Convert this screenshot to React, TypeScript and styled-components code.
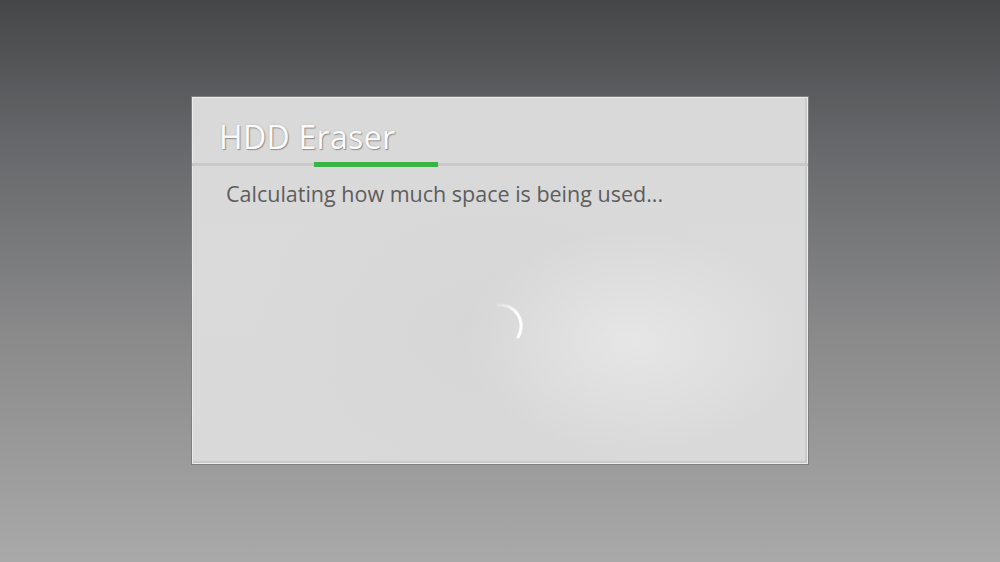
import React from "react";
import styled, { createGlobalStyle } from "styled-components";

const Global = createGlobalStyle`
  html, body { margin: 0; padding: 0; }
  body { width: 1000px; height: 562px; overflow: hidden; }
`;

const Screen = styled.div`
  width: 1000px;
  height: 562px;
  display: flex;
  align-items: center;
  justify-content: center;
  background: linear-gradient(to bottom, #454648 0%, #66676a 25%, #8a8a8b 60%, #a9a9a9 100%);
  font-family: "Open Sans", "Noto Sans", sans-serif;
`;

const Panel = styled.div`
  box-sizing: border-box;
  width: 618px;
  height: 369px;
  margin-top: -1px;
  border: 1px solid #7e7f80;
  box-shadow: inset 0 0 0 1px #ececec, inset -1px -1px 0 2px #c9c9c9;
  background:
    radial-gradient(ellipse 170px 110px at 440px 245px, rgba(236,236,236,0.7), rgba(236,236,236,0) 100%),
    radial-gradient(ellipse 240px 170px at 300px 230px, rgba(205,205,205,0.3), rgba(205,205,205,0) 100%),
    linear-gradient(to bottom, #d9d9d9 0%, #dadada 50%, #d9d9d9 100%);
  display: flex;
  flex-direction: column;
`;

const Header = styled.div`
  position: relative;
  padding-left: 27px;
  display: flex;
  align-items: flex-end;
  border-bottom: 3px solid #c9c9c9;
  box-sizing: border-box;
  height: 69px;
`;

const Title = styled.h1`
  margin: 0 0 10px 0;
  font-size: 32px;
  font-weight: 400;
  color: #fafafa;
  letter-spacing: 0.3px;
  line-height: 1;
  text-shadow: 1px 1px 1px rgba(80, 80, 80, 0.5), 0 0 2px rgba(120,120,120,0.3);
`;

const Accent = styled.div`
  position: absolute;
  left: 122px;
  bottom: -4px;
  width: 124px;
  height: 5px;
  background: #3bb446;
`;

const Body = styled.div`
  flex: 1;
  display: flex;
  flex-direction: column;
  padding: 15px 34px 0 34px;
`;

const Message = styled.p`
  margin: 0;
  font-size: 21.5px;
  color: #5d5d5d;
  line-height: 1.2;
`;

const SpinnerArea = styled.div`
  flex: 1;
  display: flex;
  justify-content: center;
  align-items: center;
  padding-bottom: 18px;
`;

const Spinner = () => (
  <svg width="50" height="50" viewBox="0 0 50 50">
    <defs>
      <linearGradient id="sg" x1="0" y1="0" x2="1" y2="1">
        <stop offset="0" stopColor="#ffffff" stopOpacity="0.2" />
        <stop offset="0.5" stopColor="#ffffff" stopOpacity="0.9" />
        <stop offset="1" stopColor="#ffffff" stopOpacity="1" />
      </linearGradient>
    </defs>
    <path
      d="M 23 4 A 21 21 0 0 1 43 36"
      fill="none"
      stroke="url(#sg)"
      strokeWidth="3"
      strokeLinecap="round"
    />
  </svg>
);

export default function App() {
  return (
    <>
      <Global />
      <Screen>
        <Panel>
          <Header>
            <Title>HDD Eraser</Title>
            <Accent />
          </Header>
          <Body>
            <Message>Calculating how much space is being used...</Message>
            <SpinnerArea>
              <Spinner />
            </SpinnerArea>
          </Body>
        </Panel>
      </Screen>
    </>
  );
}
